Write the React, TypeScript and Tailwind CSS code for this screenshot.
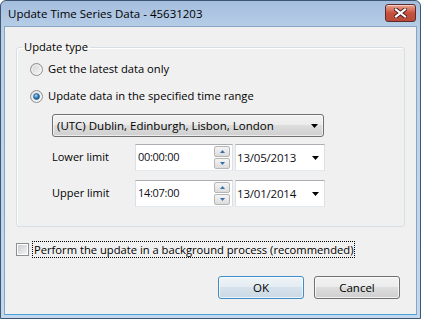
import React from "react";

const font = "font-['Segoe_UI','Open_Sans',sans-serif]";

const Radio: React.FC<{ checked?: boolean }> = ({ checked }) => (
  <svg width="13" height="13" viewBox="0 0 13 13" className="shrink-0">
    <defs>
      <linearGradient id={checked ? "rg1" : "rg0"} x1="0" y1="0" x2="1" y2="1">
        <stop offset="0" stopColor="#cfcfcf" />
        <stop offset="1" stopColor="#fbfbfb" />
      </linearGradient>
      <radialGradient id="dot" cx="0.4" cy="0.35" r="0.7">
        <stop offset="0" stopColor="#a9d8f5" />
        <stop offset="0.55" stopColor="#2f7dc0" />
        <stop offset="1" stopColor="#1a4f80" />
      </radialGradient>
    </defs>
    <circle cx="6.5" cy="6.5" r="6" fill={`url(#${checked ? "rg1" : "rg0"})`} stroke="#8e8f8f" />
    <circle cx="6.5" cy="6.5" r="4.5" fill="none" stroke="#f4f4f4" strokeWidth="0.8" />
    {checked && <circle cx="6.5" cy="6.5" r="3" fill="url(#dot)" stroke="#24527d" strokeWidth="0.6" />}
  </svg>
);

const Caret: React.FC = () => (
  <svg width="7" height="4" viewBox="0 0 7 4" className="shrink-0">
    <path d="M0 0h7L3.5 4z" fill="#000" />
  </svg>
);

const Spin: React.FC = () => (
  <div className="flex flex-col gap-[1px] mr-[2px]">
    {[0, 1].map((i) => (
      <div
        key={i}
        className="w-[16px] h-[11px] border border-[#b5b5b5] rounded-[2px] bg-gradient-to-b from-[#f5f5f5] to-[#dcdcdc] flex items-center justify-center"
      >
        <svg width="5" height="3" viewBox="0 0 5 3">
          <path d={i === 0 ? "M0 3h5L2.5 0z" : "M0 0h5L2.5 3z"} fill="#3a6fa5" />
        </svg>
      </div>
    ))}
  </div>
);

const LimitRow: React.FC<{ label: string; time: string; date: string; className?: string }> = ({
  label,
  time,
  date,
  className,
}) => (
  <div className={`flex items-center h-[27px] ${className ?? ""}`}>
    <div className="w-[83px] text-[11px] text-black">{label}</div>
    <div className="w-[98px] h-full bg-white border border-[#dbdfe6] border-t-[#abadb3] border-b-[#e3e9ef] flex items-center justify-between pl-[2px]">
      <span className="text-[11px] tracking-[-0.3px] text-[#101018]">{time}</span>
      <Spin />
    </div>
    <div className="ml-[2px] w-[90px] h-full bg-white border border-[#dbdfe6] border-t-[#abadb3] border-b-[#e3e9ef] flex items-center justify-between pl-[1px] pr-[5px]">
      <span className="text-[11.5px] tracking-[-0.2px] text-[#101018]">{date}</span>
      <Caret />
    </div>
  </div>
);

export default function App() {
  return (
    <div className={`w-[421px] h-[319px] ${font} text-black select-none`}>
      <div className="w-full h-full flex flex-col border border-[#3f5670] rounded-t-[6px] bg-gradient-to-b from-[#a5bedd] via-[#bad0ea] via-[10%] to-[#c3d8ef] overflow-hidden">
        {/* Title bar */}
        <div className="h-[25px] flex items-start justify-between shrink-0">
          <div className="pl-[7px] pt-[5px] text-[11.5px] leading-[15px] text-black">
            Update Time Series Data - 45631203
          </div>
          <div className="mt-[3px] mr-[4px] w-[31px] h-[18px] rounded-[3px] border border-[#5c2a2a] bg-gradient-to-b from-[#e8a493] via-[#c7503d] via-[50%] to-[#b84a3a] shadow-[inset_0_1px_0_rgba(255,255,255,0.5)] flex items-center justify-center">
            <svg width="13" height="10" viewBox="0 0 13 10">
              <path d="M2 1.5l9 7M11 1.5l-9 7" stroke="#4a1d1d" strokeWidth="4" strokeLinecap="square" />
              <path d="M2 1.5l9 7M11 1.5l-9 7" stroke="#fff" strokeWidth="2.2" strokeLinecap="square" />
            </svg>
          </div>
        </div>

        {/* Client area */}
        <div className="mx-[3px] mb-[3px] flex-1 bg-[#f0f0f0] border border-[#8aa5c4] border-b-[#4aa3d8] flex flex-col">
          <fieldset className="mt-[13px] ml-[11px] w-[389px] h-[187px] border border-[#d5dfe5] rounded-[3px] pl-[13px] pt-[7px] shadow-[inset_1px_1px_0_#fff]">
            <legend className="-ml-[8px] px-[2px] text-[11.2px] leading-[14px]">Update type</legend>
            <div className="flex items-center h-[16px] gap-[5px] text-[11.2px]">
              <Radio />
              <span>Get the latest data only</span>
            </div>
            <div className="flex items-center h-[16px] gap-[5px] mt-[11px] text-[11.2px]">
              <Radio checked />
              <span>Update data in the specified time range</span>
            </div>
            <div className="mt-[10px] ml-[22px] w-[272px] h-[23px] rounded-[3px] border border-[#707070] bg-[linear-gradient(#f2f2f2,#ebebeb_50%,#dddddd_50%,#cfcfcf)] shadow-[inset_0_0_0_1px_rgba(255,255,255,0.6)] flex items-center justify-between pl-[4px] pr-[5px]">
              <span className="text-[11.5px]">(UTC) Dublin, Edinburgh, Lisbon, London</span>
              <Caret />
            </div>
            <LimitRow className="mt-[7px] ml-[22px]" label="Lower limit" time="00:00:00" date="13/05/2013" />
            <LimitRow className="mt-[9px] ml-[22px]" label="Upper limit" time="14:07:00" date="13/01/2014" />
          </fieldset>

          <div className="mt-[14px] ml-[11px] h-[17px] flex items-center">
            <div className="w-[13px] h-[13px] border border-[#8e8f8f] bg-white p-[1px]">
              <div className="w-full h-full bg-gradient-to-br from-[#c9cdd2] to-[#f4f4f4]" />
            </div>
            <span className="ml-[3px] h-[17px] border border-dotted border-black px-[1px] text-[11.2px] leading-[15px]">
              Perform the update in a background process (recommended)
            </span>
          </div>

          <div className="mt-[18px] flex justify-end gap-[10px] pr-[16px]">
            <button className="w-[86px] h-[23px] rounded-[3px] border border-[#3c8dc8] bg-[linear-gradient(#eef4f8,#e4ecf2_50%,#d6e2eb_50%,#cbd9e4)] shadow-[inset_0_0_0_1px_rgba(255,255,255,0.7)] text-[11.5px]">
              OK
            </button>
            <button className="w-[86px] h-[23px] rounded-[3px] border border-[#707070] bg-[linear-gradient(#f2f2f2,#ebebeb_50%,#dddddd_50%,#cfcfcf)] shadow-[inset_0_0_0_1px_rgba(255,255,255,0.7)] text-[11.5px]">
              Cancel
            </button>
          </div>
        </div>
      </div>
    </div>
  );
}
